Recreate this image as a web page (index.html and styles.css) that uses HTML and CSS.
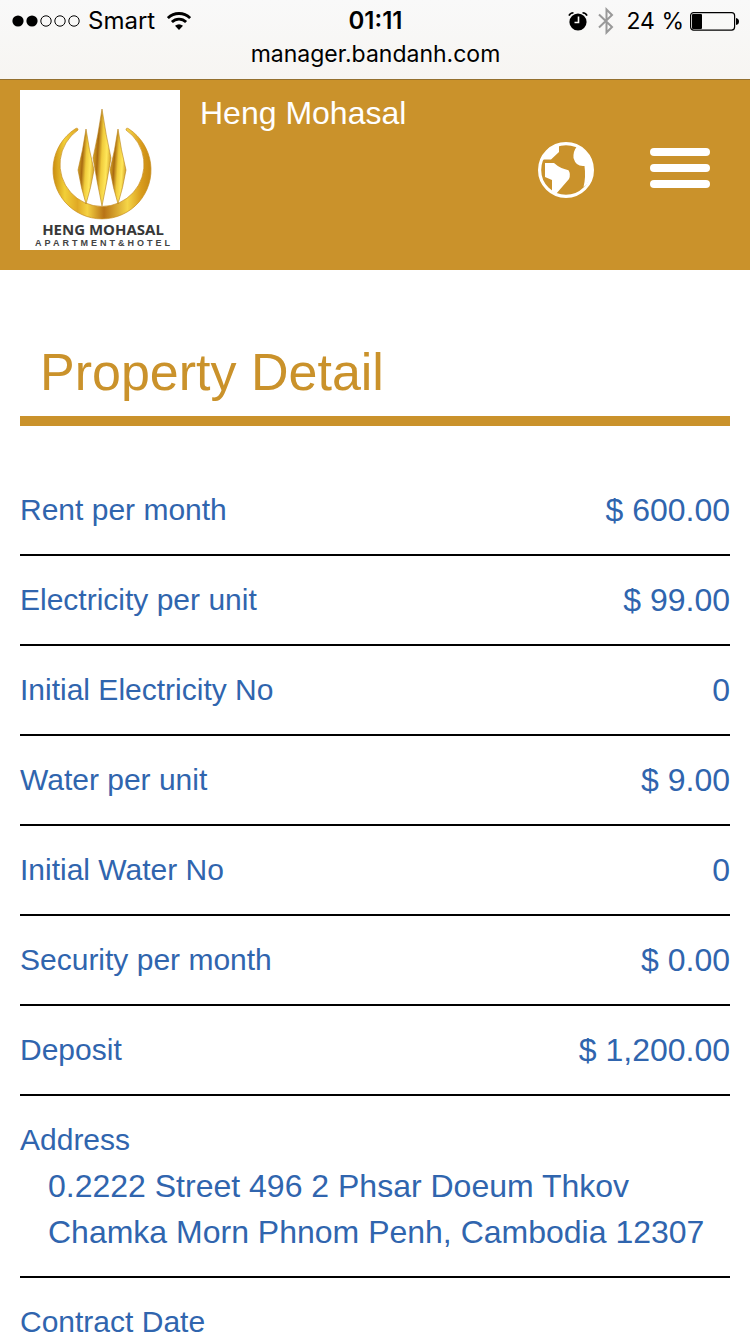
FILE: index.html
```
<!DOCTYPE html>
<html lang="en">
<head>
    <meta charset="UTF-8">
    <meta name="viewport" content="width=device-width, initial-scale=1.0">
    <title>Heng Mohasal - Property Detail</title>
    <link rel="stylesheet" href="styles.css">
</head>
<body>
    <!-- Phone status bar -->
    <div class="status">
        <div class="status-row">
            <div class="status-left">
                <svg width="68" height="12" viewBox="0 0 68 12" aria-hidden="true">
                    <circle cx="6" cy="6" r="5.6"/>
                    <circle cx="20" cy="6" r="5.6"/>
                    <g fill="none" stroke="#000">
                        <circle cx="34" cy="6" r="5.2"/>
                        <circle cx="48" cy="6" r="5.2"/>
                        <circle cx="62" cy="6" r="5.2"/>
                    </g>
                </svg>
                <span class="carrier">Smart</span>
                <svg width="24" height="18" viewBox="0 0 24 18" aria-hidden="true">
                    <g fill="none" stroke="#000" stroke-width="2.8">
                        <path d="M0.9 6.1a15.7 15.7 0 0 1 22.2 0"/>
                        <path d="M4.9 10.1a10 10 0 0 1 14.2 0"/>
                    </g>
                    <path d="M12 18l-4-4.2q4-3 8 0z"/>
                </svg>
            </div>
            <div class="time">01:11</div>
            <div class="status-right">
                <svg width="20" height="20" viewBox="0 0 20 20" aria-hidden="true">
                    <circle cx="10" cy="11" r="8.6"/>
                    <path d="M1 4.6Q2 2 5.5 1.7M19 4.6Q18 2 14.5 1.7" fill="none" stroke="#000" stroke-width="1.6"/>
                    <path d="M10.5 5.5v6H6.5" fill="none" stroke="#f8f7f5" stroke-width="1.6"/>
                </svg>
                <svg width="16" height="28" viewBox="0 0 16 28" aria-hidden="true">
                    <path d="M1 7.5L14 20 8.5 25.5V2.5L14 8 1 20.5" fill="none" stroke="#999" stroke-width="2"/>
                </svg>
                <span class="percent">24 %</span>
                <svg width="49" height="20" viewBox="0 0 49 20" aria-hidden="true">
                    <rect x="0.6" y="1.6" width="44" height="17.5" rx="3" fill="none" stroke="#000" stroke-width="1.2"/>
                    <rect x="2" y="3" width="10" height="15" rx="1"/>
                    <path d="M46 7q3 .5 3 3.500t-3 3.500z"/>
                </svg>
            </div>
        </div>
        <div class="address-bar">manager.bandanh.com</div>
    </div>

    <!-- Header -->
    <header class="header">
        <a class="logo" href="#" aria-label="Heng Mohasal home">
            <svg width="160" height="160" viewBox="0 0 160 160">
                <defs>
                    <linearGradient id="ring" x1="0" y1="0" x2="1" y2="0">
                        <stop offset="0" stop-color="#c98c10"/>
                        <stop offset=".12" stop-color="#f2cf38"/>
                        <stop offset=".25" stop-color="#e0a925"/>
                        <stop offset=".35" stop-color="#f5d242"/>
                        <stop offset=".52" stop-color="#b87316"/>
                        <stop offset=".76" stop-color="#f5d548"/>
                        <stop offset=".9" stop-color="#d99c1c"/>
                        <stop offset="1" stop-color="#c68913"/>
                    </linearGradient>
                    <linearGradient id="gem" x1="0" y1=".3" x2="1" y2=".6">
                        <stop offset="0" stop-color="#e3b62d"/>
                        <stop offset=".28" stop-color="#a96a10"/>
                        <stop offset=".5" stop-color="#f0cb3c"/>
                        <stop offset=".75" stop-color="#ffe75a"/>
                        <stop offset="1" stop-color="#cf9a24"/>
                    </linearGradient>
                </defs>
                <path d="M55 39A49 49 0 1 0 109 39Q106 37 106 40A42 42 0 1 1 58 40Q58 37 55 39z" fill="url(#ring)" stroke="#c78c1c" stroke-width=".7"/>
                <g fill="url(#gem)" stroke="#b98118" stroke-width=".6">
                    <path d="M66 39Q69 60 74 80Q71 98 66 114Q61 98 58 80Q63 60 66 39z"/>
                    <path d="M98 39Q101 60 106 80Q103 98 98 114Q93 98 90 80Q95 60 98 39z"/>
                    <path d="M82 19Q86 46 91 68Q87 92 82 116Q77 92 73 68Q78 46 82 19z"/>
                </g>
                <text class="logo-name" x="83" y="145" text-anchor="middle">HENG MOHASAL</text>
                <text class="logo-sub" x="84" y="156" text-anchor="middle">APARTMENT&amp;HOTEL</text>
            </svg>
        </a>
        <div class="site-name">Heng Mohasal</div>
        <div class="actions">
            <button class="icon-button" type="button" aria-label="Language">
                <svg width="56" height="56" viewBox="0 0 56 56">
                    <circle cx="28" cy="28" r="26.4" fill="none" stroke="#fff" stroke-width="3.2"/>
                    <path d="M3 18L11 6 21 2V10L13 17.5H5z" fill="#fff"/>
                    <path d="M7 21H16Q22 26.5 30.5 28.2Q33 32 31 37L18 52 14 49V38L7 35z" fill="#fff"/>
                    <path d="M39 4.5Q35 9 35.5 16Q38 25 46.5 24Q48 35 45.5 45Q53 40 54 28Q54 12 39 4.5z" fill="#fff"/>
                </svg>
            </button>
            <button class="icon-button" type="button" aria-label="Menu">
                <svg width="60" height="44" viewBox="0 0 60 44" fill="#fff">
                    <rect width="60" height="8" rx="4"/>
                    <rect y="16" width="60" height="8" rx="4"/>
                    <rect y="32" width="60" height="8" rx="4"/>
                </svg>
            </button>
        </div>
    </header>

    <!-- Property Detail -->
    <main class="content">
        <h1>Property Detail</h1>
        <dl class="details">
            <div class="row"><dt>Rent per month</dt><dd>$ 600.00</dd></div>
            <div class="row"><dt>Electricity per unit</dt><dd>$ 99.00</dd></div>
            <div class="row"><dt>Initial Electricity No</dt><dd>0</dd></div>
            <div class="row"><dt>Water per unit</dt><dd>$ 9.00</dd></div>
            <div class="row"><dt>Initial Water No</dt><dd>0</dd></div>
            <div class="row"><dt>Security per month</dt><dd>$ 0.00</dd></div>
            <div class="row"><dt>Deposit</dt><dd>$ 1,200.00</dd></div>
            <div class="row stacked"><dt>Address</dt><dd>0.2222 Street 496 2 Phsar Doeum Thkov Chamka Morn Phnom Penh, Cambodia 12307</dd></div>
            <div class="row"><dt>Contract Date</dt><dd></dd></div>
        </dl>
    </main>
</body>
</html>
```
FILE: styles.css
```
* { box-sizing: border-box; }
body { margin: 0; height: 100vh; display: flex; flex-direction: column; background: #fff; font-family: "Liberation Sans", Arial, sans-serif; }
svg { display: block; flex: none; }

/* Status bar */
.status { flex: none; background: linear-gradient(#f9f9f9, #f7f5f2); border-bottom: 1px solid #94702f; font-family: Inter, sans-serif; font-size: 23px; color: #000; padding: 4px 11px 8px 12px; }
.status-row { display: grid; grid-template-columns: 1fr auto 1fr; align-items: center; height: 33px; }
.status-left, .status-right { display: flex; align-items: center; }
.carrier { margin: 0 12px 0 8px; font-size: 24px; }
.time { font-size: 24px; font-weight: 600; }
.status-right { justify-content: flex-end; gap: 10px; }
.percent { margin: 0 -4px 0 2px; }
.address-bar { text-align: center; line-height: 34px; }

/* Header */
.header { flex: none; display: flex; gap: 20px; background: #ca922b; padding: 10px 40px 20px 20px; }
.logo { background: #fff; }
.logo-name { font: bold 15px "Noto Sans", sans-serif; fill: #383838; }
.logo-sub { font: bold 9px "Liberation Sans", sans-serif; letter-spacing: 3px; fill: #444; }
.site-name { flex: 1; color: #fff; font-size: 32px; line-height: 46px; }
.actions { display: flex; align-items: center; gap: 56px; }
.icon-button { background: none; border: 0; padding: 0; cursor: pointer; }

/* Details */
.content { flex: 1; min-height: 0; overflow-y: auto; scrollbar-width: none; padding: 72px 20px 0; }
h1 { margin: 0 0 40px; padding: 0 20px 14px; border-bottom: 10px solid #ca922b; color: #ca922b; font-size: 52px; font-weight: normal; line-height: 60px; }
.details { margin: 0; color: #3065ae; line-height: 46px; }
.row { display: flex; justify-content: space-between; padding: 21px 0; border-bottom: 2px solid #000; }
.row dt { font-size: 30px; }
.row dd { margin: 0; font-size: 32px; }
.stacked { display: block; }
.stacked dd { padding: 0 20px 0 28px; }
```
